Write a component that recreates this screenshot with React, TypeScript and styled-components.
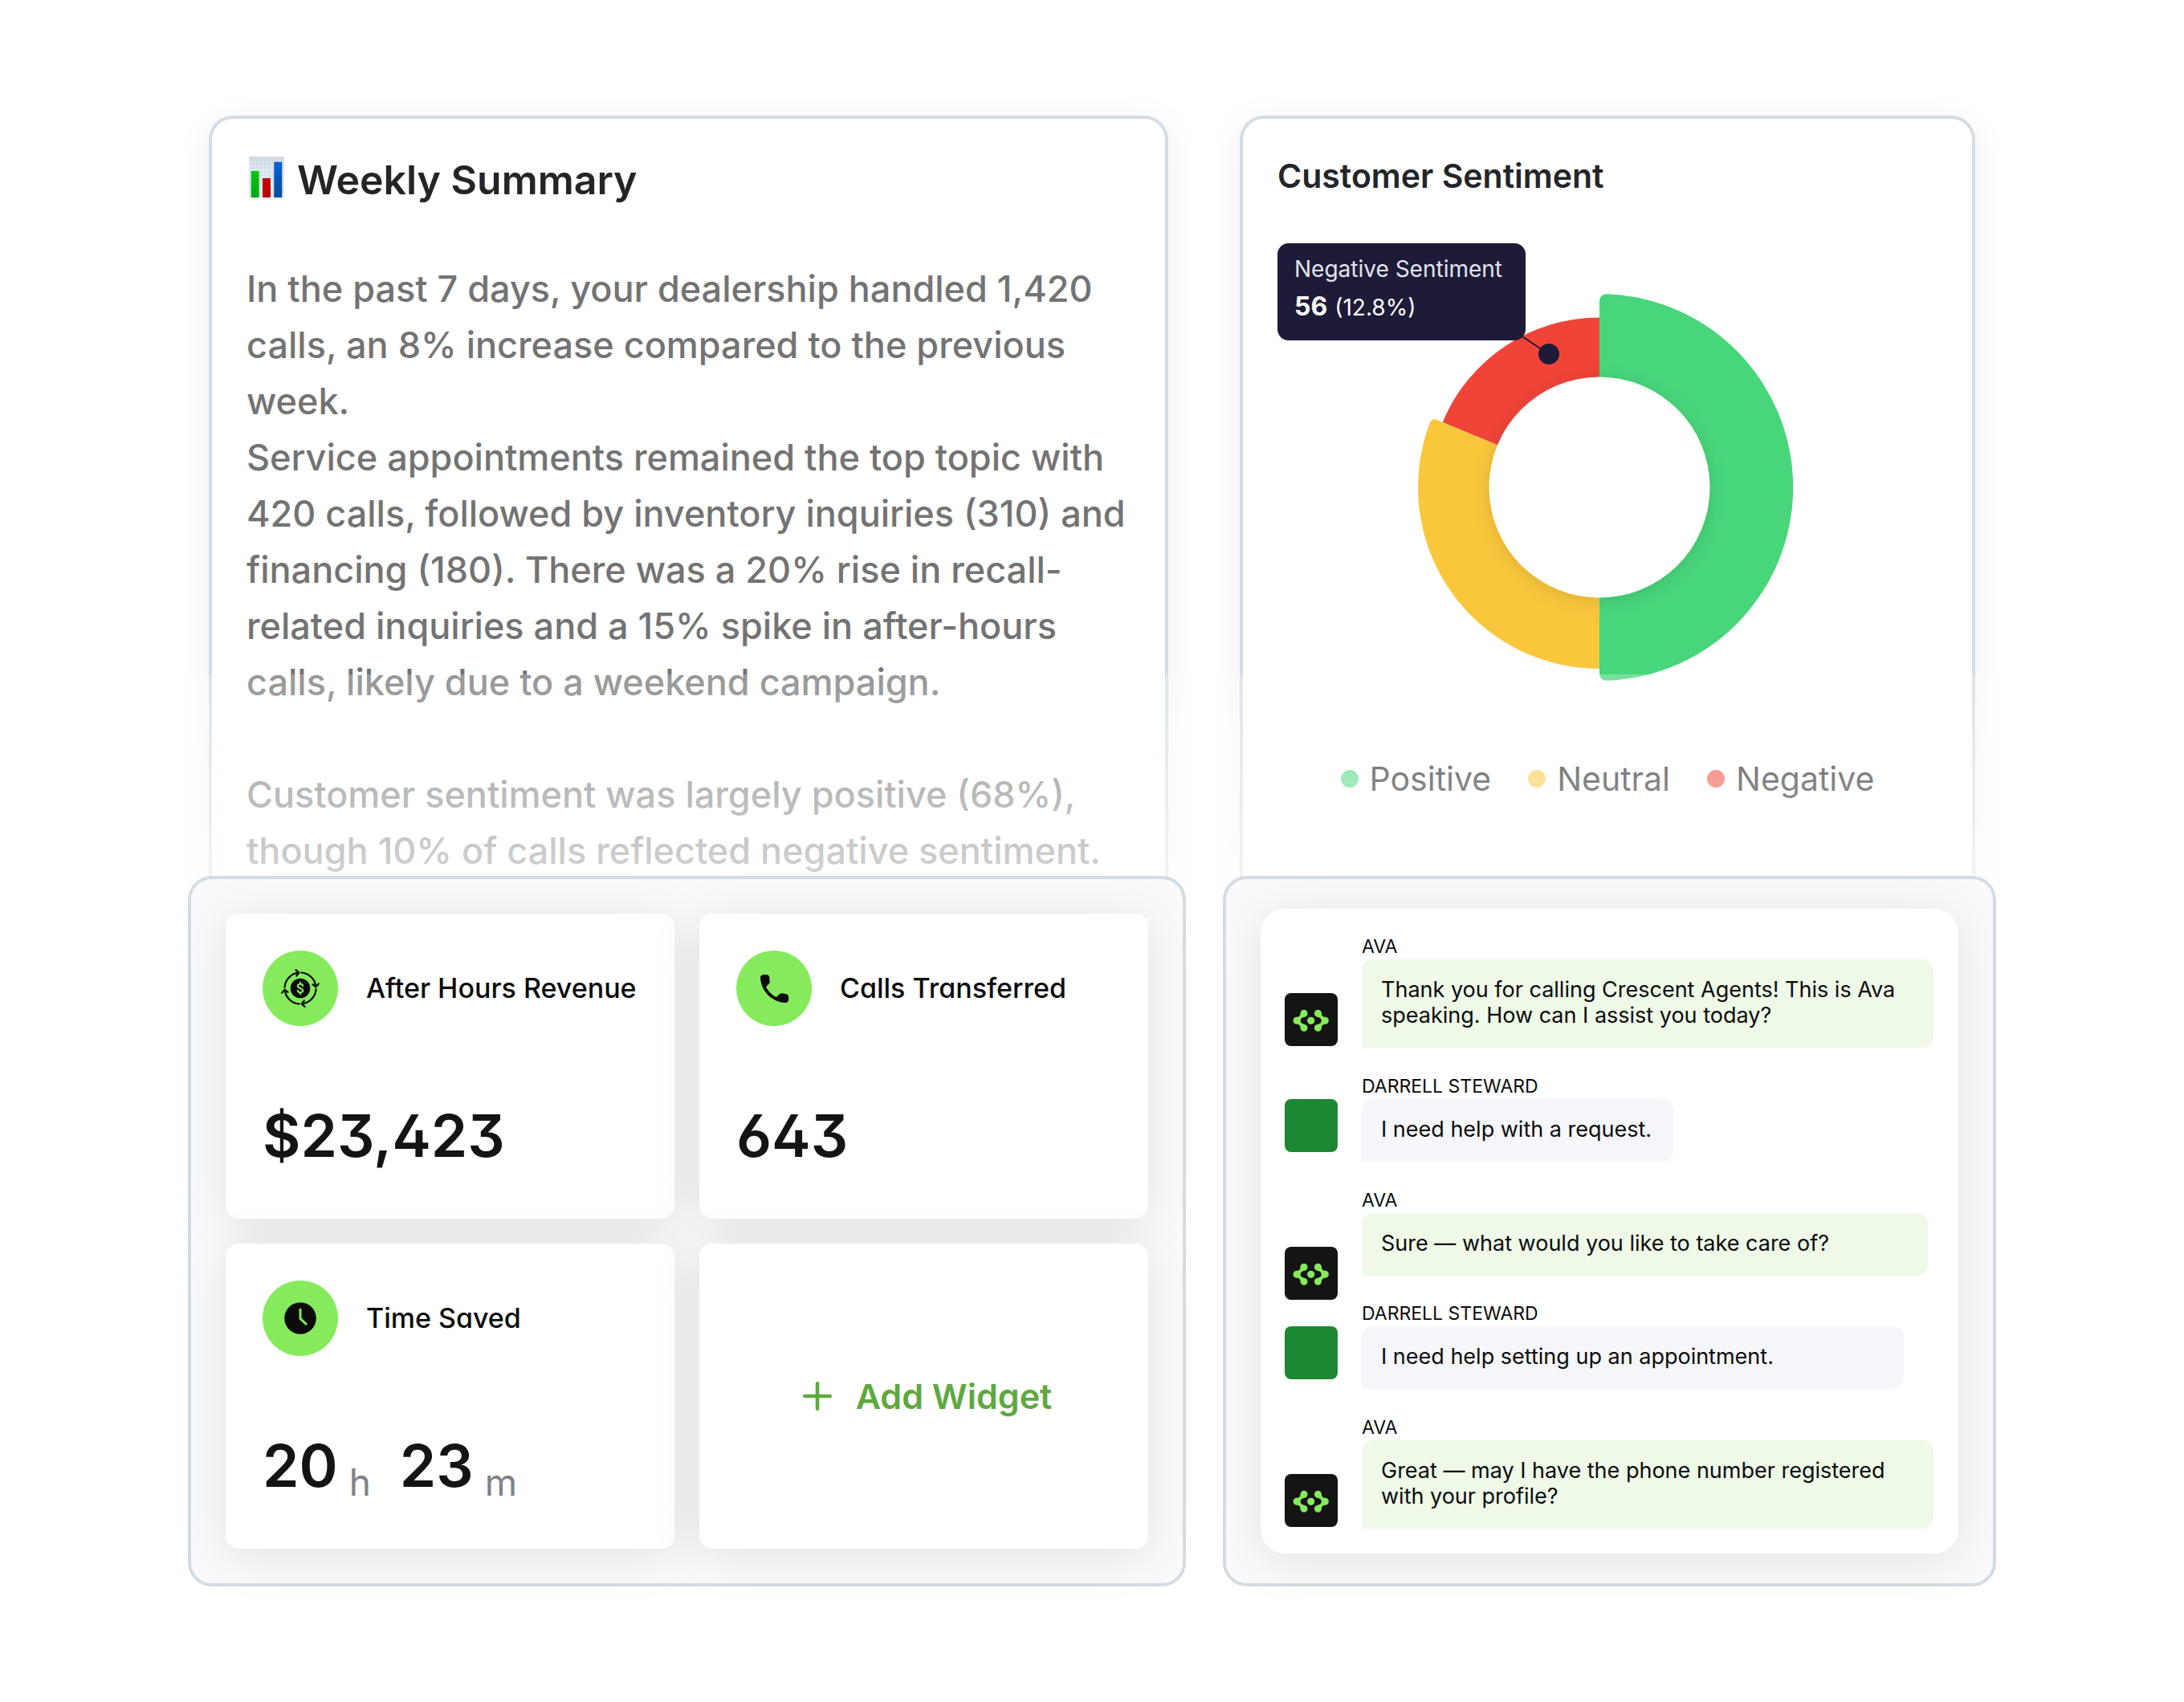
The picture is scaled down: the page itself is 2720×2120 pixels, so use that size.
import React from 'react';
import styled, { createGlobalStyle } from 'styled-components';
import { Plus } from 'lucide-react';

const GlobalStyle = createGlobalStyle`
  *, *::before, *::after { box-sizing: border-box; }
  body {
    margin: 0;
    background: #ffffff;
    color: #0b0b0c;
    font-family: Inter, "Liberation Sans", sans-serif;
  }
  h2, h3, p, ul { margin: 0; padding: 0; }
  ul { list-style: none; }
`;

const frame = '#d4dce2';
const lime = '#86eb5c';
const ink = '#141414';

const Page = styled.main`
  display: grid;
  grid-template-columns: minmax(0, 1243fr) minmax(0, 963fr);
  column-gap: 46px;
  padding: 144px 234px;
`;

/* ---------- fading report cards ---------- */

const ReportCard = styled.section<{ $side: 'left' | 'right' }>`
  position: relative;
  margin: ${(p) => (p.$side === 'left' ? '0 22px -44px 26px' : '0 26px -44px 21px')};
  padding: 43px 43px 36px;
  border: 4px solid ${frame};
  border-radius: 30px;
  background: #ffffff;
  box-shadow: 0 8px 48px rgba(20, 20, 30, 0.06);

  &::after {
    content: '';
    position: absolute;
    inset: auto -48px -4px;
    height: 295px;
    background: linear-gradient(rgba(255, 255, 255, 0.26), rgba(255, 255, 255, 0.75));
    pointer-events: none;
  }
`;

const SummaryTitle = styled.h2`
  display: flex;
  align-items: center;
  gap: 16px;
  margin-bottom: 68px;
  font-size: 50px;
  line-height: 66px;
  font-weight: 600;
  color: #242528;
`;

const SummaryText = styled.p`
  font-size: 45px;
  line-height: 70px;
  font-weight: 500;
  color: #737373;

  & + & { margin-top: 70px; }
`;

const SentimentTitle = styled.h2`
  margin-bottom: 55px;
  font-size: 41px;
  line-height: 57px;
  font-weight: 600;
  color: #242528;
`;

const ChartArea = styled.div`
  position: relative;
  display: flex;
  justify-content: center;
  padding-top: 63px;
`;

const Donut = styled.svg`
  display: block;
  width: 482px;
  height: 482px;
  overflow: visible;
`;

const Tooltip = styled.div`
  position: absolute;
  top: 0;
  left: 0;
  padding: 11px 21px 15px;
  width: 309px;
  border-radius: 14px;
  background: #1e1b39;
  color: #ffffff;
  font-size: 28px;
  white-space: nowrap;
`;

const TooltipLabel = styled.div`
  line-height: 42px;
  color: #e4e4ee;
`;

const TooltipValue = styled.div`
  display: flex;
  align-items: baseline;
  gap: 9px;
  line-height: 51px;

  strong { font-size: 32px; font-weight: 700; }
`;

const Legend = styled.ul`
  display: flex;
  justify-content: center;
  gap: 46px;
  margin-top: 97px;
  font-size: 41px;
  line-height: 50px;
  color: #0f0f0f;
`;

const LegendItem = styled.li<{ $color: string }>`
  display: flex;
  align-items: center;
  gap: 14px;

  &::before {
    content: '';
    width: 22px;
    height: 22px;
    border-radius: 50%;
    background: ${(p) => p.$color};
  }
`;

/* ---------- lower panels ---------- */

const Panel = styled.section<{ $pad: string }>`
  position: relative;
  z-index: 1;
  display: grid;
  padding: ${(p) => p.$pad};
  border: 4px solid ${frame};
  border-radius: 30px;
  background: #f8fafc;
`;

const WidgetPanel = styled(Panel)`
  grid-template-columns: repeat(2, minmax(0, 1fr));
  grid-auto-rows: minmax(380px, auto);
  gap: 31px;
`;

const cardShadow = '0 8px 64px rgba(20, 20, 20, 0.1)';

const StatCard = styled.article`
  display: flex;
  flex-direction: column;
  justify-content: space-between;
  padding: 46px 46px 56px;
  border-radius: 16px;
  background: #ffffff;
  box-shadow: ${cardShadow};
`;

const StatHead = styled.header`
  display: flex;
  align-items: center;
  gap: 35px;
`;

const IconDisc = styled.span`
  display: grid;
  place-items: center;
  flex: none;
  width: 94px;
  height: 94px;
  border-radius: 50%;
  background: ${lime};
  color: #0b0b0c;
`;

const StatName = styled.h3`
  font-size: 34px;
  line-height: 44px;
  font-weight: 500;
  font-feature-settings: 'cv11';
  white-space: nowrap;
`;

const StatValue = styled.p<{ $openDigits?: boolean }>`
  display: flex;
  align-items: flex-end;
  font-size: 73px;
  line-height: 94px;
  font-weight: 600;
  color: ${ink};
  font-feature-settings: ${(p) => (p.$openDigits ? "'cv02', 'cv03', 'cv09'" : 'normal')};
`;

const Unit = styled.span`
  margin: 0 36px 0 14px;
  font-size: 46px;
  line-height: 54px;
  font-weight: 400;
  color: #828089;
`;

const AddButton = styled.button`
  display: flex;
  align-items: center;
  justify-content: center;
  gap: 21px;
  border: 0;
  border-radius: 16px;
  background: #ffffff;
  box-shadow: ${cardShadow};
  color: #5fa83f;
  font: 600 43px/54px Inter, "Liberation Sans", sans-serif;
  cursor: pointer;
`;

/* ---------- chat ---------- */

const ChatCard = styled.ul`
  display: flex;
  flex-direction: column;
  justify-content: space-between;
  gap: 33px;
  padding: 33px 31px 31px 30px;
  border-radius: 30px;
  background: #ffffff;
  box-shadow: ${cardShadow};
`;

const Message = styled.li`
  display: flex;
  align-items: flex-start;
  gap: 30px;
`;

const Avatar = styled.span<{ $agent: boolean }>`
  flex: none;
  width: 66px;
  height: 66px;
  margin: ${(p) => (p.$agent ? '72px 0 -30px' : '30px 0 0')};
  border-radius: 8px;
  background: ${(p) => (p.$agent ? ink : '#1d8833')};

  svg { display: block; }
`;

const MessageBody = styled.div`
  flex: 1;
  min-width: 0;
`;

const Sender = styled.h3`
  margin-bottom: 2px;
  font-size: 23px;
  line-height: 28px;
  font-weight: 400;
  text-transform: uppercase;
`;

const Bubble = styled.p<{ $agent: boolean; $width: string }>`
  width: ${(p) => p.$width};
  max-width: 100%;
  padding: 22px 27px 24px 24px;
  border-radius: 14px 14px 14px 0;
  background: ${(p) => (p.$agent ? '#eef9e8' : '#f5f6f9')};
  font-size: 27px;
  line-height: 32px;
`;

/* ---------- drawings ---------- */

const BarChartEmoji = () => (
  <svg width="47" height="58" viewBox="-3 0 47 58" aria-hidden="true">
    <defs>
      <linearGradient id="sheet" x1="0" y1="0" x2="0" y2="1">
        <stop offset="0" stopColor="#d5dade" />
        <stop offset="0.3" stopColor="#e0ebf5" />
        <stop offset="1" stopColor="#e9eff4" />
      </linearGradient>
      <linearGradient id="barGreen" x1="0" y1="0" x2="0" y2="1">
        <stop offset="0" stopColor="#06c918" />
        <stop offset="1" stopColor="#04a514" />
      </linearGradient>
      <linearGradient id="barBlue" x1="0" y1="0" x2="0" y2="1">
        <stop offset="0" stopColor="#0762d6" />
        <stop offset="1" stopColor="#054a9f" />
      </linearGradient>
    </defs>
    <rect width="44" height="51" fill="url(#sheet)" />
    <path
      d="M0 4H44M0 9H44M0 14H44M0 19H44M0 24H44M0 29H44M0 34H44M0 39H44M0 44H44M5 0V51M10 0V51M15 0V51M20 0V51M25 0V51M30 0V51M35 0V51M40 0V51"
      stroke="#c6d3df"
      strokeWidth="0.6"
    />
    <rect x="2.7" y="18" width="10" height="33" fill="url(#barGreen)" />
    <rect x="17" y="27" width="10" height="24" fill="#c00404" />
    <rect x="31.3" y="6.7" width="10" height="44.3" fill="url(#barBlue)" />
  </svg>
);

const quarterTurns = [0, 90, 180, 270];

const RevenueIcon = () => (
  <svg width="54" height="54" viewBox="-27 -27 54 54" fill="none" aria-hidden="true">
    {quarterTurns.map((turn) => (
      <path
        key={turn}
        transform={`rotate(${turn})`}
        d="M-19.5 -1.2A19.5 19.5 0 0 1 -2.5 -19.3M-5.6 -22.8L-1.6 -19.4L-4.8 -15.4"
        stroke="currentColor"
        strokeWidth="2.2"
        strokeLinecap="round"
        strokeLinejoin="round"
      />
    ))}
    <circle r="12.3" fill="currentColor" />
    <path
      d="M3.2 -2.9C3.2 -4.4 1.8 -5.2 0 -5.2C-1.9 -5.2 -3.2 -4.2 -3.2 -2.7C-3.2 -1.1 -1.8 -0.6 0 0C1.9 0.6 3.2 1.2 3.2 2.8C3.2 4.3 1.9 5.2 0 5.2C-1.9 5.2 -3.2 4.3 -3.2 2.8M0 -7.2V-5.2M0 5.2V7.2"
      stroke={lime}
      strokeWidth="2.1"
      strokeLinecap="round"
    />
  </svg>
);

const PhoneIcon = () => (
  <svg width="47" height="47" viewBox="0 0 24 24" fill="currentColor" aria-hidden="true">
    <path d="M19.23 15.26l-2.54-.29a1.99 1.99 0 0 0-1.64.57l-1.84 1.84a15.045 15.045 0 0 1-6.59-6.59l1.85-1.85c.43-.43.64-1.03.57-1.64l-.29-2.52a2.001 2.001 0 0 0-1.99-1.77H5.03c-1.13 0-2.07.94-2 2.07.53 8.54 7.36 15.36 15.89 15.89 1.13.07 2.07-.87 2.07-2v-1.73c.01-1.01-.75-1.86-1.76-1.98z" />
  </svg>
);

const ClockIcon = () => (
  <svg width="40" height="40" viewBox="-20 -20 40 40" fill="none" aria-hidden="true">
    <circle r="19.8" fill="currentColor" />
    <path d="M0 -12V0.4L8 8" stroke={lime} strokeWidth="3" />
  </svg>
);

const AgentMark = () => (
  <svg width="66" height="66" viewBox="0 0 66 66" fill={lime} aria-hidden="true">
    <circle cx="32.7" cy="34.3" r="4.6" />
    {[1, -1].map((dir) => (
      <path
        key={dir}
        transform={dir === 1 ? undefined : 'translate(65.4 0) scale(-1 1)'}
        d="M24 20.8a4.5 4.5 0 0 1 4.5 4.5c0 3-2 4.2-4.4 4.6c-3 .5-4.4 2-4.4 4.4s1.4 3.9 4.4 4.4c2.4 .4 4.4 1.6 4.4 4.6a4.5 4.5 0 0 1-9 0c0-3-1.5-4.5-4.5-4.5a4.5 4.5 0 0 1 0-9c3 0 4.5-1.5 4.5-4.5a4.5 4.5 0 0 1 4.5-4.5Z"
      />
    ))}
  </svg>
);

const SentimentDonut = () => (
  <Donut viewBox="-231 -241 482 482" role="img" aria-label="Share of positive, neutral and negative calls">
    <defs>
      <filter id="holeShadow" x="-30%" y="-30%" width="160%" height="160%">
        <feDropShadow dx="0" dy="4" stdDeviation="11" floodColor="#000000" floodOpacity="0.12" />
      </filter>
      <clipPath id="ring">
        <path d="M0 -241A241 241 0 0 1 0 241V226A226 226 0 0 1 -208.8 -86.5L-195.4 -80.9A211.5 211.5 0 0 1 0 -211.5Z" />
      </clipPath>
    </defs>
    <path d="M0 0V-211.5A211.5 211.5 0 0 0 -195.4 -80.9Z" fill="#f14438" />
    <path d="M0 0V226A226 226 0 0 1 -211.5 -79.6Q-207.5 -88.5 -198.5 -82.2Z" fill="#fac63c" />
    <path d="M0 0V-231Q0 -241 10 -240.8A241 241 0 0 1 10 240.8Q0 241 0 231Z" fill="#48d67a" />
    <g clipPath="url(#ring)">
      <circle r="137.5" fill="#ffffff" filter="url(#holeShadow)" />
    </g>
    <path d="M-98 -189L-63 -166" stroke="#1e1b39" strokeWidth="2" />
    <circle cx="-63" cy="-166" r="13" fill="#1e1b39" />
  </Donut>
);

/* ---------- content ---------- */

type ChatMessage = { from: 'Ava' | 'Darrell Steward'; text: string; width: string };

const messages: ChatMessage[] = [
  { from: 'Ava', text: 'Thank you for calling Crescent Agents! This is Ava speaking. How can I assist you today?', width: '100%' },
  { from: 'Darrell Steward', text: 'I need help with a request.', width: 'fit-content' },
  { from: 'Ava', text: 'Sure — what would you like to take care of?', width: '99%' },
  { from: 'Darrell Steward', text: 'I need help setting up an appointment.', width: '675px' },
  { from: 'Ava', text: 'Great — may I have the phone number registered with your profile?', width: '100%' },
];

export default function App() {
  return (
    <>
      <GlobalStyle />
      <Page>
        <ReportCard $side="left">
          <SummaryTitle>
            <BarChartEmoji />
            Weekly Summary
          </SummaryTitle>
          <SummaryText>
            In the past 7 days, your dealership handled 1,420 calls, an 8% increase compared to the previous week.
            <br />
            Service appointments remained the top topic with 420 calls, followed by inventory inquiries (310) and
            financing (180). There was a 20% rise in recall-related inquiries and a 15% spike in after-hours calls,
            likely due to a weekend campaign.
          </SummaryText>
          <SummaryText>
            Customer sentiment was largely positive (68%), though 10% of calls reflected negative sentiment.
          </SummaryText>
        </ReportCard>

        <ReportCard $side="right">
          <SentimentTitle>Customer Sentiment</SentimentTitle>
          <ChartArea>
            <SentimentDonut />
            <Tooltip>
              <TooltipLabel>Negative Sentiment</TooltipLabel>
              <TooltipValue>
                <strong>56</strong>
                <span>(12.8%)</span>
              </TooltipValue>
            </Tooltip>
          </ChartArea>
          <Legend>
            <LegendItem $color="#48d67a">Positive</LegendItem>
            <LegendItem $color="#fac63c">Neutral</LegendItem>
            <LegendItem $color="#f14438">Negative</LegendItem>
          </Legend>
        </ReportCard>

        <WidgetPanel $pad="43px">
          <StatCard>
            <StatHead>
              <IconDisc><RevenueIcon /></IconDisc>
              <StatName>After Hours Revenue</StatName>
            </StatHead>
            <StatValue $openDigits>$23,423</StatValue>
          </StatCard>
          <StatCard>
            <StatHead>
              <IconDisc><PhoneIcon /></IconDisc>
              <StatName>Calls Transferred</StatName>
            </StatHead>
            <StatValue $openDigits>643</StatValue>
          </StatCard>
          <StatCard>
            <StatHead>
              <IconDisc><ClockIcon /></IconDisc>
              <StatName>Time Saved</StatName>
            </StatHead>
            <StatValue>
              20<Unit>h</Unit>23<Unit>m</Unit>
            </StatValue>
          </StatCard>
          <AddButton type="button">
            <Plus size={54} strokeWidth={2} />
            Add Widget
          </AddButton>
        </WidgetPanel>

        <Panel $pad="37px 43px">
          <ChatCard>
            {messages.map((message) => {
              const agent = message.from === 'Ava';
              return (
                <Message key={message.text}>
                  <Avatar $agent={agent}>{agent && <AgentMark />}</Avatar>
                  <MessageBody>
                    <Sender>{message.from}</Sender>
                    <Bubble $agent={agent} $width={message.width}>{message.text}</Bubble>
                  </MessageBody>
                </Message>
              );
            })}
          </ChatCard>
        </Panel>
      </Page>
    </>
  );
}
